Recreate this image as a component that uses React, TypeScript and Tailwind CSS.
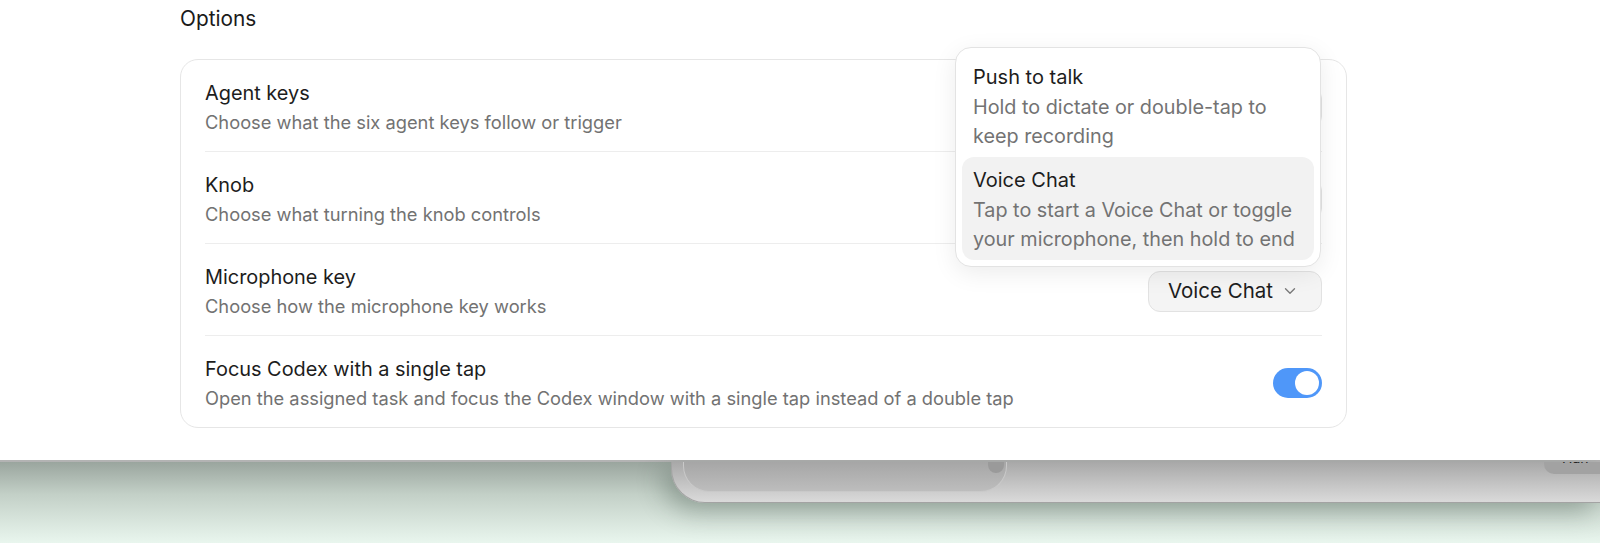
import React from "react";

function Chevron() {
  return (
    <svg width="12" height="8" viewBox="0 0 12 8" className="ml-[11px] shrink-0">
      <path d="M1.5 1.75 L6 6.25 L10.5 1.75" fill="none" stroke="#7a7a7a" strokeWidth="1.4" strokeLinecap="round" strokeLinejoin="round" />
    </svg>
  );
}

function SelectButton({ label }: { label: string }) {
  return (
    <div className="mb-[3px] flex h-[41px] items-center rounded-[12px] border border-[#e2e2e2] bg-[#f4f4f4] pl-[19px] pr-[25px] text-[20.5px] text-[#1d1d1d]">
      <span>{label}</span>
      <Chevron />
    </div>
  );
}

function Toggle() {
  return (
    <div className="mb-[4px] flex h-[30px] w-[49px] items-center justify-end rounded-full bg-[#4f97f9] pr-[3px]">
      <div className="h-[24px] w-[24px] rounded-full bg-white" />
    </div>
  );
}

function Row({
  title,
  desc,
  right,
  last,
}: {
  title: string;
  desc: string;
  right: React.ReactNode;
  last?: boolean;
}) {
  return (
    <div className={"flex items-center justify-between pt-[20px] pb-[14px] " + (last ? "" : "border-b border-[#ededed]")}>
      <div className="flex flex-col">
        <div className="text-[19.9px] leading-[27px] text-[#1d1d1d]">{title}</div>
        <div className="text-[18.3px] leading-[30px] text-[#727272]">{desc}</div>
      </div>
      {right}
    </div>
  );
}

function MenuItem({
  title,
  lines,
  active,
}: {
  title: string;
  lines: string[];
  active?: boolean;
}) {
  return (
    <div className={"rounded-[12px] px-[11px] pt-[9px] pb-[6px] " + (active ? "bg-[#f2f2f2]" : "")}>
      <div className="text-[20px] leading-[28px] text-[#1d1d1d]">{title}</div>
      <div className="mt-[2px] whitespace-nowrap text-[19.8px] leading-[29px] text-[#737373]">
        {lines.map((l) => (
          <div key={l}>{l}</div>
        ))}
      </div>
    </div>
  );
}

export default function App() {
  return (
    <div className="flex h-[543px] w-[1600px] flex-col overflow-hidden bg-white font-['Inter','Noto_Sans',sans-serif] antialiased">
      <div className="relative h-[460px] shrink-0 bg-white">
        <div className="pl-[180px] pt-[4px] text-[20.8px] leading-[29px] text-[#1a1a1a]">Options</div>
        <div className="ml-[180px] mt-[26px] w-[1167px] rounded-[18px] border border-[#e6e6e6] px-[24px]">
          <Row
            title="Agent keys"
            desc="Choose what the six agent keys follow or trigger"
            right={<SelectButton label="Codex tasks" />}
          />
          <Row
            title="Knob"
            desc="Choose what turning the knob controls"
            right={<SelectButton label="Volume" />}
          />
          <Row
            title="Microphone key"
            desc="Choose how the microphone key works"
            right={<SelectButton label="Voice Chat" />}
          />
          <Row
            title="Focus Codex with a single tap"
            desc="Open the assigned task and focus the Codex window with a single tap instead of a double tap"
            right={<Toggle />}
            last
          />
        </div>

        <div className="absolute left-[955px] top-[47px] w-[366px] rounded-[16px] border border-[#e3e3e3] bg-white p-[6px] shadow-[0_6px_24px_rgba(0,0,0,0.08)]">
          <MenuItem title="Push to talk" lines={["Hold to dictate or double-tap to", "keep recording"]} />
          <MenuItem
            title="Voice Chat"
            lines={["Tap to start a Voice Chat or toggle", "your microphone, then hold to end"]}
            active
          />
        </div>
      </div>

      <div className="flex h-[83px] shrink-0 border-t-[2px] border-[#b3b3b3] bg-[linear-gradient(180deg,#9aa59e_0%,#c3d0c7_40%,#e9f6ee_100%)]">
        <div className="ml-[671px] flex h-[41px] flex-1 rounded-bl-[34px] border-b border-l border-[#a3a3a3] bg-[linear-gradient(180deg,#a8a8a8_0%,#c4c4c4_55%,#dadada_100%)] shadow-[-8px_8px_26px_rgba(40,60,50,0.35)]">
          <div className="ml-[11px] flex h-[30px] w-[324px] items-start justify-end rounded-b-[26px] border-b border-l border-r border-[#c9c9c9] bg-[linear-gradient(180deg,#a6a6a6_0%,#bdbdbd_100%)] pr-[2px]">
            <div className="h-[11px] w-[16px] rounded-b-full bg-[#9a9a9a]" />
          </div>
          <div className="flex-1" />
          <div className="h-[12px] w-[56px] overflow-hidden rounded-bl-[10px] bg-[#a2a2a2] pl-[18px]">
            <div className="-mt-[12px] text-[14px] leading-[16px] text-[#222]">Han</div>
          </div>
        </div>
      </div>
    </div>
  );
}
